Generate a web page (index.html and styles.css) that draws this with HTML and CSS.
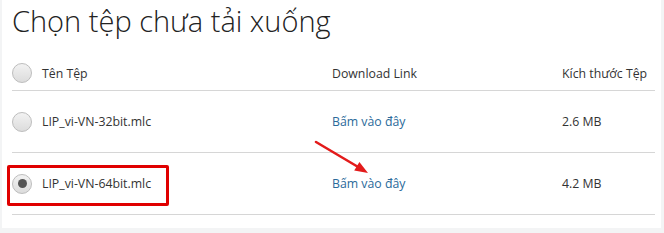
FILE: index.html
```html
<!DOCTYPE html>
<html lang="vi">
<head>
  <meta charset="UTF-8" />
  <title>Chọn tệp chưa tải xuống</title>
  <link rel="stylesheet" href="styles.css">
</head>
<body>

<div class="panel">
  <h1 class="title">Chọn tệp chưa tải xuống</h1>

  <div class="files">
    <div class="row head">
      <span class="radio"></span>
      <span>Tên Tệp</span>
      <span>Download Link</span>
      <span>Kích thước Tệp</span>
    </div>
    <div class="row">
      <span class="radio"></span>
      <span>LIP_vi-VN-32bit.mlc</span>
      <a href="#" class="link">Bấm vào đây</a>
      <span>2.6 MB</span>
    </div>
    <div class="row">
      <span class="radio checked"></span>
      <span>LIP_vi-VN-64bit.mlc</span>
      <a href="#" class="link">Bấm vào đây</a>
      <span>4.2 MB</span>
    </div>
  </div>

  <!-- chú thích đỏ -->
  <div class="mark"></div>
  <svg class="arrow" width="60" height="40" viewBox="0 0 60 40" xmlns="http://www.w3.org/2000/svg" aria-hidden="true">
    <line x1="2" y1="2" x2="45" y2="27.5" stroke="#e31b1b" stroke-width="2.6" stroke-linecap="round"/>
    <polygon points="54,33 40.2,30.6 45.4,22" fill="#e31b1b"/>
  </svg>
</div>

</body>
</html>
```

FILE: styles.css
```css
body {
  margin: 0;
  background: #f3f4f5;
  font-family: "Open Sans", "Noto Sans", sans-serif;
  color: #333;
}

.panel {
  position: relative;
  background: #fff;
  margin: 0 3px 0 2px;
  padding: 0 6px 14px 10px;
  height: 214px;
}

.title {
  margin: 0;
  padding-top: 1px;
  font-size: 29px;
  font-weight: 300;
  line-height: 40px;
  color: #222;
}

.files {
  margin-top: 15px;
}

.row {
  display: grid;
  grid-template-columns: 30px 290px 230px 1fr;
  align-items: center;
  height: 61px;
  border-bottom: 1px solid #d6d6d6;
  font-size: 12.3px;
}

.row.head {
  height: 34px;
}

.radio {
  width: 18px;
  height: 18px;
  border: 1px solid #bdbdbd;
  border-radius: 50%;
  background: linear-gradient(#f2f2f2, #dcdcdc);
  box-sizing: content-box;
  display: flex;
  align-items: center;
  justify-content: center;
}

.radio.checked::after {
  content: "";
  width: 9px;
  height: 9px;
  border-radius: 50%;
  background: #555;
}

.link {
  color: #2b6a9a;
  text-decoration: none;
}

.mark {
  position: absolute;
  left: 5px;
  top: 165px;
  width: 156px;
  height: 35px;
  border: 3px solid #e00000;
  border-radius: 2px;
}

.arrow {
  position: absolute;
  left: 312px;
  top: 140px;
}
```
